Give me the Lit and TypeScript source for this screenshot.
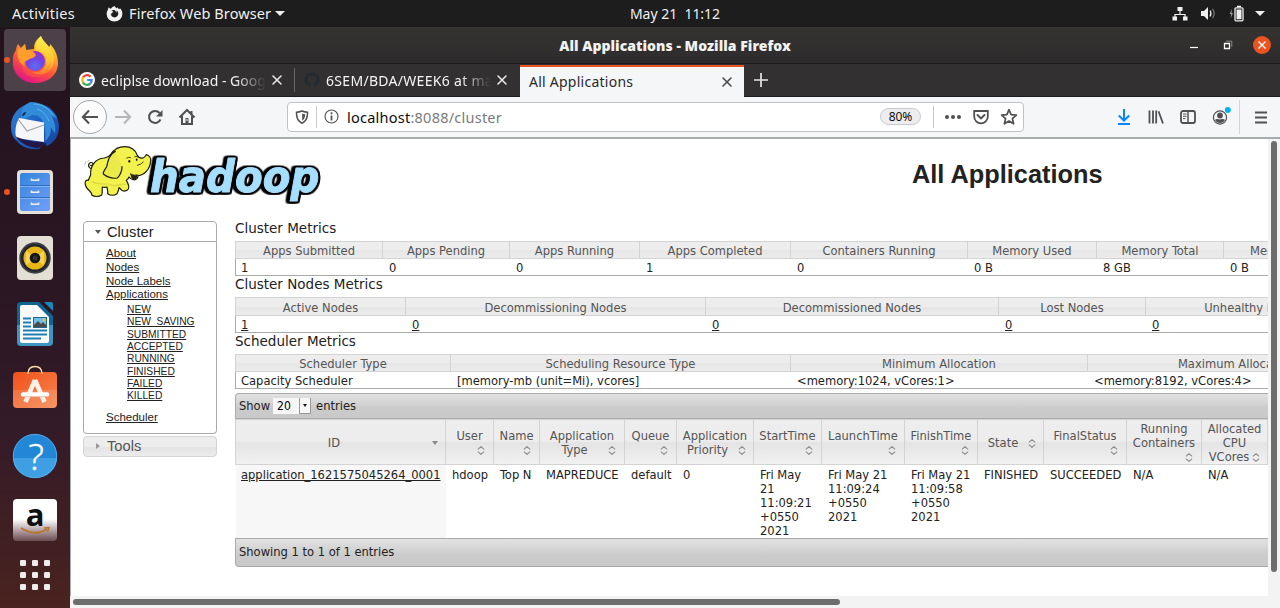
import { LitElement, html, css, svg } from "lit";
import { customElement } from "lit/decorators.js";

/* ---------- icon helpers ---------- */
const icon = (size: number, body: unknown, box = size) =>
  html`<svg width=${size} height=${size} viewBox="0 0 ${box} ${box}" fill="none">${body}</svg>`;

const closeX = (c: string) =>
  icon(12, svg`<path d="M2 2l8 8M10 2l-8 8" stroke=${c} stroke-width="1.6" stroke-linecap="round"/>`);

const sortBoth = html`<svg class="both" width="8" height="9" viewBox="0 0 8 9" fill="none"><path d="M1.300 3.500V2.900L4 .7l2.700 2.200v.6M1.300 5.500v.6L4 8.300l2.700-2.200v-.6" stroke="#8c8c8c" stroke-width="1.150"/></svg>`;

@customElement("desktop-topbar")
class DesktopTopbar extends LitElement {
  static styles = css`
    :host { display: grid; grid-template-columns: 1fr auto 1fr; align-items: center; height: 27px; background: #1d1d1d;
      color: #f0f0f0; font: 14px/27px "Noto Sans", "Open Sans", sans-serif; white-space: pre; }
    .left { display: flex; align-items: center; padding-left: 12px; font-size: 14.500px; }
    .act { width: 94px; letter-spacing: 0.25px; }
    .app { margin-left: 6px; width: 142px; letter-spacing: 0.1px; }
    .fx { display: flex; }
    .caret { border: 5px solid transparent; border-top-color: #f0f0f0; border-bottom: 0; margin-left: 4px; }
    .right { display: flex; align-items: center; justify-content: flex-end; padding-right: 15px; }
    .clock { margin-left: 70px; letter-spacing: -0.02px; }
    .net { margin-right: 13px; } .vol { margin-right: 11px; } .bat { margin-right: 7px; }
    svg { display: block; }
  `;
  render() {
    return html`
      <div class="left">
        <span class="act">Activities</span>
        <span class="fx">${icon(17, svg`<path d="M8.500 1C9 2.200 10 2.500 10.500 3.500l1-1.200c.6 1 1 1.500 1.700 1.900l.8-.9C16 5.500 16.600 7.200 16.300 9.500A7.800 7.200 0 0 1 .7 9.300C.5 7.500 1 6 2 4.700c0-.9.2-1.700.8-2.500.4.800 1 1.300 2 1.500C6 2.500 7 1.500 8.500 1z" fill="#f2f2f2"/><path d="M8.800 5.200C7.500 4.800 6.200 5 5.300 5.800l2 .8c-.3 1.300-2.300 1.500-2.300 3 0 1.500 1.600 2.800 3.500 2.800 2.200 0 3.800-1.600 3.800-3.800 0-1.600-.8-2.500-1.800-3 .3 1 .2 1.700-.2 2.200C10 6.600 9.600 5.700 8.800 5.200z" fill="#1d1d1d"/>`)}</span>
        <span class="app">Firefox Web Browser</span><i class="caret"></i>
      </div>
      <span class="clock">May 21  11:12</span>
      <div class="right">
        <span class="net">${icon(16, svg`<path d="M8 4v5M3 11V8.500h10V11" stroke="#f0f0f0" stroke-width="1.200"/><path d="M5.500 1h5v4h-5zM.5 10.500h4.500v4H.5zM11 10.500h4.500v4H11z" fill="#f0f0f0"/>`)}</span>
        <span class="vol">${icon(15, svg`<path d="M0 5h3l4-4v13l-4-4H0z" fill="#f0f0f0"/><path d="M9 4.500q2 3 0 6" stroke="#f0f0f0" stroke-width="1.200"/><path d="M11.500 2.800q3.500 4.700 0 9.400" stroke="#777" stroke-width="1.200"/>`)}</span>
        <span class="bat">${icon(17, svg`<path d="M5 4L2.500 9h1.700L3.500 13.500 6 8H4.500z" fill="#999"/><rect x="8" y="2.800" width="8" height="13" rx="1" stroke="#f0f0f0" stroke-width="1.300"/><path d="M10 .8h4v1.500h-4zM9.500 4.500h5v9.700h-5z" fill="#f0f0f0"/>`)}</span>
        <i class="caret"></i>
      </div>`;
  }
}

@customElement("desktop-dock")
class DesktopDock extends LitElement {
  static styles = css`
    :host { display: flex; flex-direction: column; width: 70px; height: 581px; box-sizing: border-box;
      background: linear-gradient(#22131d, #2b1624 45%, #341b28 70%, #49231f); }
    .cell { display: grid; grid-template-columns: 4px 62px 4px; align-items: center; height: 66px; }
    .tile { width: 62px; height: 62px; border-radius: 4px; display: grid; place-items: center; }
    .active { background: #4c4149; }
    .dot { width: 6px; height: 6px; border-radius: 3px; background: #e95420; position: relative; left: 4px; z-index: 1; }
    .store { height: 62px; } .help { height: 74px; } .amz { height: 54px; } .apps { height: 56px; }
    .amz .tile, .apps .tile { height: 54px; }
    svg { display: block; overflow: visible; }
    .q { font: 300 37px "Open Sans", sans-serif; }
    .a { font: bold 31px "Open Sans", sans-serif; }
  `;
  cell(body: unknown, cls = "", running = false, active = false) {
    return html`<div class="cell ${cls}">
      <span>${running ? html`<div class="dot"></div>` : ""}</span>
      <div class="tile ${active ? "active" : ""}">${body}</div>
    </div>`;
  }
  render() {
    return html`
      ${this.cell(icon(50, svg`
        <defs>
          <linearGradient id="fa" x1=".8" y1="0" x2=".3" y2="1"><stop offset="0" stop-color="#fff44f"/><stop offset=".35" stop-color="#ffa52a"/><stop offset=".65" stop-color="#ff4f3f"/><stop offset="1" stop-color="#e0128a"/></linearGradient>
          <linearGradient id="fb" x1=".5" y1="0" x2=".4" y2="1"><stop offset="0" stop-color="#fff44f"/><stop offset=".6" stop-color="#ffc52e"/><stop offset="1" stop-color="#ff8a2a"/></linearGradient>
          <radialGradient id="fc" cx=".5" cy=".75" r=".8"><stop offset="0" stop-color="#5a70f5"/><stop offset=".5" stop-color="#7542e5"/><stop offset="1" stop-color="#a32bc8"/></radialGradient>
        </defs>
        <path d="M31 1c1 4 5 7 8 11 1-1 1-2 1-3 5 5 8 12 8 19 0 12-10 20-23 20S2.800 39 2.800 27c0-6 1.200-9 3.200-12 0-2 1-4 2-6l3 4 4-4 1 6c2 0 5-1 8-1 0-6 2-9 7-13z" fill="url(#fa)"/>
        <path d="M31 1c1 4 5 7 8 11 7 8 6 18 0 24-5 4-13 4-17 1 9 1 15-4 14-12 0-5-4-8-10-9 -2-6 1-11 5-15z" fill="url(#fb)"/>
        <circle cx="25" cy="26" r="10" fill="url(#fc)"/>
        <path d="M8 14l3-1 4-4 1 6c3 0 7 0 10 5 -1 3-5 3-8 5-3 1-4 3-3 7-6-4-9-10-7-18z" fill="#ff9d2d"/>
        <path d="M15 25c1 7 6 12 14 11 7 0 11-5 12-10 0 12-9 17-19 16C13 40 10 32 15 25z" fill="#ff6a34" opacity=".4"/>`), "", true, true)}
      ${this.cell(icon(50, svg`
        <defs><linearGradient id="ta" x1="0" y1="0" x2="1" y2="1"><stop offset="0" stop-color="#2f86d6"/><stop offset=".5" stop-color="#1e5fc0"/><stop offset="1" stop-color="#1a3f9a"/></linearGradient></defs>
        <path d="M17 3C20 0 25 1 28 3c13 1 21 11 21 23 0 9-5 16-12 19-1-1-2-2-1-4-3 3-8 8-7 7-12 1-18-3-22-8C2 37 1 30 1 25 1 15 7 7 17 3z" fill="url(#ta)"/>
        <path d="M17 3c10-5 24 3 30 14-3 0-4-1-6-3 4 7 5 12 4 18-2-2-3-4-4-6 0 7-2 11-6 14C37 26 32 13 23 14c-6 1-8 6-12 5 0-7 1-13 6-16z" fill="#318bd8"/>
        <path d="M24 3c8 0 15 5 19 11M27 8c6 2 9 6 12 12" stroke="#5cb4ec" stroke-width="1"/>
        <path d="M9 17L34 21.500V41L6 37Q4 26 9 17z" fill="#f6f6f8"/><path d="M8 18l9 12 17-6" stroke="#a0a0aa" stroke-width="1.200"/>
        <path d="M5 35c8 4 18 6 29 6 0 4-3 5-6 6-8 0-18-5-23-12z" fill="#241747"/>
        <path d="M12 15q1-4 4-4-1 4-4 4z" fill="#10233e"/>`))}
      ${this.cell(icon(46, svg`
        <defs><linearGradient id="da" x1="0" y1="0" x2=".7" y2="1"><stop offset="0" stop-color="#3384dc"/><stop offset="1" stop-color="#6b9cf5"/></linearGradient></defs>
        <rect x="5" y="1" width="36" height="44" rx="4" fill="#e6e1d8"/><rect x="8" y="4" width="30" height="38" rx="2.500" fill="url(#da)"/>
        <path d="M8 16.500h30M8 28.500h30" stroke="#1d61b8" stroke-width="1"/><path d="M8 17.300h30M8 29.300h30" stroke="#a9cbfa" stroke-width=".7"/>
        <path d="M19.500 9.500v1.700h7V9.500M19.500 21.500v1.700h7v-1.700M19.500 33.500v1.700h7v-1.700" stroke="#f2eee6" stroke-width="1.600"/>`), "", true)}
      ${this.cell(icon(46, svg`<rect x="5" y="1" width="36" height="44" rx="4" fill="#e3dfd5"/>
        <circle cx="23" cy="23" r="15.700" fill="#3a3e43"/><circle cx="23" cy="23" r="13.800" fill="#20242b"/><circle cx="23" cy="23" r="11.500" fill="#e8b716"/><path d="M23 23L32 15.500v15zM23 23l-9-7.500v15z" fill="#f5d35a"/>
        <circle cx="23" cy="23" r="5.300" fill="#151515"/><circle cx="23" cy="23" r="2.500" fill="#333"/>`))}
      ${this.cell(icon(46, svg`<path d="M9 1h18l14 14v26a4 4 0 0 1-4 4H9a4 4 0 0 1-4-4V5a4 4 0 0 1 4-4z" fill="#0f6593"/><path d="M5 24h36v17a4 4 0 0 1-4 4H9a4 4 0 0 1-4-4z" fill="#5fb5e0" opacity=".6"/>
        <path d="M32 1h7a2 2 0 0 1 2 2v7z" fill="#1b89b8"/>
        <path d="M10 4h15l12 12v24a2 2 0 0 1-2 2H10a2 2 0 0 1-2-2V6a2 2 0 0 1 2-2z" fill="#fbfbfb"/>
        <path d="M11 17.500h8M11 21.500h8M11 25.500h8M11 29.500h24M11 33.500h24M11 37.500h18" stroke="#1d7fb5" stroke-width="1.800"/>
        <rect x="21.500" y="16.500" width="13" height="10" fill="#6fbfe8" stroke="#1b6a96"/><path d="M22 26v-2l4-4 3 3 2-2 3 3v2z" fill="#4a4a4a"/><circle cx="32" cy="19" r="1.400" fill="#f2c230"/>`))}
      ${this.cell(icon(48, svg`
        <defs><linearGradient id="sa" x1="0" y1="0" x2="1" y2="1"><stop offset="0" stop-color="#f1511b"/><stop offset="1" stop-color="#f5874f"/></linearGradient></defs>
        <g transform="translate(0 -1)"><rect x="2" y="9" width="44" height="36" rx="4" fill="url(#sa)"/>
        <path d="M2 27h44v14a4 4 0 0 1-4 4H6a4 4 0 0 1-4-4z" fill="#fff" opacity=".12"/><path d="M17 11c0-5 3-7.500 7-7.500s7 2.500 7 7.500" stroke="#f5d9a4" stroke-width="1.400"/>
        <path d="M24 17L14.500 39M24 17l9.500 22" stroke="#fff0e8" stroke-width="4.600"/><path d="M12 31.500h24" stroke="#fff" stroke-width="4.400" stroke-linecap="round"/><path d="M12 33.600h24" stroke="#f0b59c" stroke-width=".8"/></g>`), "store")}
      ${this.cell(icon(46, svg`
        <circle cx="23" cy="23" r="22" fill="#2387d8"/><path d="M1 25h44a22 20 0 0 1-44 0z" fill="#3e9fe2"/><circle cx="23" cy="23" r="21.700" stroke="#5ab2ee" stroke-width=".8"/>
        <text class="q" x="24" y="36.500" text-anchor="middle" fill="#fff" stroke="#fff" stroke-width=".5">?</text>`), "help")}
      ${this.cell(icon(46, svg`
        <defs><linearGradient id="aa" x1="0" y1="0" x2="0" y2="1"><stop offset=".48" stop-color="#fff"/><stop offset="1" stop-color="#6b4a52"/></linearGradient></defs>
        <rect x="1" y="2" width="44" height="42" rx="4" fill="url(#aa)"/><text class="a" x="23" y="29" text-anchor="middle" fill="#101010">a</text>
        <path d="M9 31q14 9 26 1" stroke="#b8752b" stroke-width="1.800"/><path d="M32 31l5-.5-1.500 4.500" stroke="#b8752b" stroke-width="1.500"/>`), "amz")}
      ${this.cell(icon(30, svg`${[0, 12, 24].map(y => [0, 12, 24].map(x => svg`<rect x=${x} y=${y} width="6" height="6" rx="1.300" fill="#efedec"/>`))}`), "apps")}`;
  }
}

@customElement("browser-chrome")
class BrowserChrome extends LitElement {
  static styles = css`
    :host { display: block; height: 112px; font-family: "Noto Sans", "Open Sans", sans-serif; }
    svg { display: block; }
    .title { display: grid; grid-template-columns: 1fr auto 1fr; align-items: center; height: 36px; background: linear-gradient(#353431, #2d2b2c);
      border-bottom: 1px solid #1c1b1b; color: #f2f2f2; font-size: 14px; font-weight: 700; }
    .title b { letter-spacing: 0.04px; }
    .win { display: flex; align-items: center; justify-content: flex-end; padding-right: 9px; }
    .win span { display: grid; place-items: center; width: 34px; height: 20px; }
    .win .x { width: 18px; height: 18px; border-radius: 9px; background: #e95420; margin-left: 8px; }
    .tabs { display: flex; height: 33px; box-sizing: border-box; background: #323031; border-bottom: 1px solid #1d1c1c; padding-left: 1px; }
    .tab { display: flex; align-items: center; width: 223px; height: 32px; box-sizing: border-box; padding: 0 11px 0 8px; font-size: 14px; color: #f4f4f4; }
    .tab.two { width: 225px; padding: 0 12px 0 9px; }
    .two .txt { letter-spacing: 0.3px; }
    .tab .txt { flex: 1; overflow: hidden; white-space: nowrap; padding-left: 6px; margin-right: 5px; height: 32px; line-height: 33px;
      -webkit-mask-image: linear-gradient(90deg, #000 82%, transparent 100%); }
    .sep { width: 1px; height: 24px; background: #6a696a; align-self: center; }
    .tab.on { width: 224px; height: 32px; margin-top: 1px; background: #f5f6f7; border-top: 2px solid #e95420; color: #2b2a2b; }
    .tab.on .txt { padding-left: 1px; -webkit-mask-image: none; line-height: 30px; height: 30px; letter-spacing: 0.25px; }
    .plus { align-self: center; padding-left: 9px; }
    .bar { display: flex; align-items: center; height: 42px; box-sizing: border-box; background: #f5f6f7; border-bottom: 2px solid #aaabac; padding: 0 3px 1px 3px; }
    .c { display: grid; place-items: center; width: 32px; height: 32px; }
    .back { width: 32px; height: 32px; border: 1px solid #a5a6a8; border-radius: 17px; background: #fcfcfc; }
    .url { display: flex; align-items: center; width: 737px; height: 30px; box-sizing: border-box; border: 1px solid #c0c2c6; border-radius: 4px; background: #fff; margin-left: 84px; }
    .url .v { width: 1px; height: 22px; background: #c8c9cc; }
    .addr { margin-left: 2px; width: 533px; font-size: 14.500px; color: #7b7b7e; letter-spacing: 0.24px; white-space: nowrap; }
    .addr b { font-weight: 400; color: #0c0c0d; }
    .zoom { width: 39px; height: 15px; border: 1px solid #c8c9cb; border-radius: 9px; background: #ededf0; font-size: 12px; line-height: 15px; text-align: center; color: #0c0c0d; margin-right: 12px; }
    .s { display: grid; place-items: center; width: 28px; height: 28px; }
    .push { margin-left: auto; }
    .bar > .v { width: 1px; height: 34px; background: #d4d5d8; margin: 0 5px 0 3px; }
  `;
  render() {
    const g = "#505053";
    return html`
      <div class="title"><span></span><b>All Applications - Mozilla Firefox</b>
        <div class="win">
          <span>${icon(10, svg`<path d="M1 7.500h8" stroke="#fff" stroke-width="1.200"/>`)}</span>
          <span>${icon(10, svg`<path d="M1.500 3.500h5v5h-5z" stroke="#fff" stroke-width="1.300"/><path d="M3 1.200h5.800V7" stroke="#888"/>`)}</span>
          <span class="x">${icon(10, svg`<path d="M1.500 1.500l7 7M8.500 1.500l-7 7" stroke="#fff" stroke-width="1.400"/>`)}</span>
        </div>
      </div>
      <div class="tabs">
        <div class="tab">${icon(16, svg`<circle cx="8" cy="8" r="8" fill="#fff"/><g stroke-width="2.200"><path d="M11.600 4.700A4.700 4.700 0 0 0 4 5.500" stroke="#ea4335"/><path d="M4.200 5.200a5 5 0 0 0 0 5.600" stroke="#fbbc05"/><path d="M4 10.500a4.700 4.700 0 0 0 7.200 1.100" stroke="#34a853"/><path d="M8.200 8h4.500q0 2.200-1.500 3.600" stroke="#4285f4"/></g>`)}
          <span class="txt">ecliplse download - Goog</span>${closeX("#e8e8e8")}</div>
        <i class="sep"></i>
        <div class="tab two">${icon(16, svg`<path d="M8 .5a7.500 7.500 0 0 0-2.400 14.600c.5.1.6-.2.6-.5v-1.600C4 13.500 3.500 12 3.500 12 3 11 2.500 11 2.500 10.500c1 0 1.500 1 1.500 1 .7 1 1.800.8 2.200.6 0-.5.3-.9.5-1-2-.3-3.500-1-3.500-3.600 0-.9.300-1.600.8-2.100-.1-.3-.3-1.200.1-2.200 0 0 .7-.2 2.200.8a7 7 0 0 1 3.600 0c1.500-1 2.200-.8 2.200-.8.4 1 .2 1.900.1 2.200.5.5.8 1.200.8 2.100 0 2.600-1.600 3.300-3.500 3.500.3.300.6.900.6 1.500v2c0 .3.100.6.500.5A7.500 7.500 0 0 0 8 .5z" fill="#222a31"/>`)}
          <span class="txt">6SEM/BDA/WEEK6 at ma</span>${closeX("#e8e8e8")}</div>
        <div class="tab on"><span class="txt">All Applications</span>${closeX("#4a4a4c")}</div>
        <span class="plus">${icon(16, svg`<path d="M8 1v14M1 8h14" stroke="#e6e6e6" stroke-width="1.700"/>`)}</span>
      </div>
      <div class="bar">
        <span class="c back">${icon(18, svg`<path d="M17 9H2M8 2.500L1.800 9 8 15.500" stroke=${g} stroke-width="2"/>`)}</span>
        <span class="c">${icon(18, svg`<path d="M1 9h15M10 2.500L16.200 9 10 15.500" stroke="#b4b5b7" stroke-width="2"/>`)}</span>
        <span class="c">${icon(16, svg`<path d="M13.500 10.500A6 6 0 1 1 12.600 4" stroke=${g} stroke-width="2"/><path d="M15.500 1v6.500H9z" fill=${g}/>`)}</span>
        <span class="c">${icon(18, svg`<path d="M1.500 9.500L9 2l7.500 7.500M4 8v8h10V8M13.500 3v3" stroke=${g} stroke-width="2"/><path d="M7.500 10h3v6h-3z" fill=${g}/><path d="M8.500 11h1v2h-1z" fill="#fff"/>`)}</span>
        <div class="url">
          <span class="s">${icon(14, svg`<path d="M7 1q3 1.200 5.500 1.200C12.700 8 11 11.500 7 13.200 3 11.500 1.300 8 1.500 2.200 4 2.200 7 1 7 1z" stroke=${g} stroke-width="1.500"/><path d="M7.200 3.500q1.500.7 3 .8c0 3-1 5-3 6.400z" fill=${g}/>`)}</span>
          <i class="v"></i>
          <span class="s">${icon(15, svg`<circle cx="7.500" cy="7.500" r="6.500" stroke=${g} stroke-width="1.100"/><path d="M7.500 6.500v5M7.500 3.300v1.900" stroke=${g} stroke-width="1.700"/>`)}</span>
          <span class="addr"><b>localhost</b>:8088/cluster</span>
          <span class="zoom">80%</span><i class="v"></i>
          <span class="s push">${icon(18, svg`<circle cx="3" cy="9" r="2" fill=${g}/><circle cx="9" cy="9" r="2" fill=${g}/><circle cx="15" cy="9" r="2" fill=${g}/>`)}</span>
          <span class="s">${icon(16, svg`<path d="M1.200 2h13.600v5.500a6.800 6.800 0 0 1-13.600 0z" stroke=${g} stroke-width="1.800"/><path d="M4.500 6L8 9.500 11.500 6" stroke=${g} stroke-width="1.900" stroke-linecap="round"/>`)}</span>
          <span class="s">${icon(18, svg`<path d="M9 1.700l2.100 5 5.300.4-4 3.500 1.200 5.200L9 13l-4.600 2.800 1.200-5.200-4-3.500 5.300-.4z" stroke=${g} stroke-width="1.700" stroke-linejoin="round"/>`)}</span>
        </div>
        <span class="c push">${icon(16, svg`<path d="M8 0v11.500M2.800 6.500L8 11.700l5.200-5.200M2 15h12" stroke="#0a84ff" stroke-width="2"/>`)}</span>
        <span class="c">${icon(16, svg`<path d="M1.500 1.500v13M5 1.500v13M8.200 1.500v13M10.500 2.300L15 14.500" stroke=${g} stroke-width="1.800"/>`)}</span>
        <span class="c">${icon(16, svg`<rect x="1" y="2" width="14" height="12" rx="2" stroke=${g} stroke-width="1.800"/><path d="M8 2v12" stroke=${g} stroke-width="1.500"/><path d="M3 5h3.500M3 7.300h3.500M3 9.600h2.500" stroke=${g}/>`)}</span>
        <span class="c">${icon(22, svg`<circle cx="11" cy="11.500" r="6.600" stroke=${g} stroke-width="1.200"/><circle cx="11" cy="9.500" r="2.900" fill=${g}/><path d="M6 14c1.500-1.700 2.500-.5 5-.5s3.500-1.200 5 .5c-1 2-3 3-5 3s-4-1-5-3z" fill=${g}/><circle cx="18.800" cy="4" r="3" fill="#00b3f4"/>`)}</span>
        <i class="v"></i>
        <span class="c">${icon(14, svg`<path d="M1 2.500h12M1 7.500h12M1 12.500h12" stroke=${g} stroke-width="1.900"/>`)}</span>
      </div>`;
  }
}

@customElement("hadoop-logo")
class HadoopLogo extends LitElement {
  static styles = css`
    :host { display: block; }
    svg { display: block; overflow: visible; }
    text { font: italic 700 134px "DejaVu Sans", Verdana, sans-serif; fill: #a5deff; stroke: #a5deff; stroke-width: 3; stroke-linejoin: round;
      filter: drop-shadow(-4px 0 0 #000) drop-shadow(5px 0 0 #000) drop-shadow(0 -4px 0 #000) drop-shadow(0 5px 0 #000) drop-shadow(-7px 0 0 #000); }
  `;
  render() {
    return html`<svg width="240" height="60" viewBox="36 18 720 180" fill="none">
      <text x="234" y="162" textLength="508" lengthAdjust="spacingAndGlyphs">hadoop</text>
      <g fill="#f3f14c" stroke="#1a1a08" stroke-width="3.600" stroke-linejoin="round" stroke-linecap="round">
        <path d="M66 92C54 96 46 84 52 76q8-6 11 2-1 6-7 4" fill="none"/>
        <path d="M56 110C54 84 70 62 96 60c8-2 14-2 20-10 8-14 24-24 43-24 18 0 32 10 36 24 4 8 10 12 18 10 6-2 8-8 10-10 8 2 14 10 13 19-2 24-18 42-38 44 0 8-6 14-14 12-6 0-10-4-13-8-2 6-4 8-8 10 6 10 10 18 6 26-4 6-14 8-20 4-4-4-6-8-8-8-2 8-2 12-6 18-8 6-20 6-28 0 2-8-2-14-2-20-8 2-14 0-14 0-2 10 2 16-2 24-8 6-22 6-30 0 2-6-6-12-12-18-6-6-10-18-6-24 4-4 8-2 8-2z"/>
        <path d="M130 40C112 48 108 68 104 86c-4 8-12 14-10 22 12 10 30 14 42 12 8-6 14-22 14-34" fill="#ece94a"/>
        <path d="M164 60q6-4 12-1M188 56q5-3 9 1M196 82q12-2 18-10" fill="none" stroke-width="2.400"/>
        <ellipse cx="172" cy="70" rx="3" ry="4" fill="#111" stroke="none"/><ellipse cx="194" cy="65" rx="2.500" ry="3.500" fill="#111" stroke="none"/>
        <path d="M176 108q10 6 20 2-2 14-10 14t-10-16z" fill="#24241c" stroke-width="2"/>
      </g>
      <path d="M38 80l4-10M46 72l6-6M126 36l12-10" stroke="#999" stroke-width="2"/>
      <path d="M60 130c20 14 50 2 60 12 20 4 30-8 42-2" stroke="#c8c43c" stroke-width="4" opacity=".5"/>
    </svg>`;
  }
}

type Col = [label: string, width: number, value: string];

@customElement("metrics-table")
class MetricsTable extends LitElement {
  static properties = { cols: { attribute: false }, linked: { type: Boolean }, heading: {}, tall: { type: Boolean } };
  declare cols: Col[]; declare linked: boolean; declare heading: string; declare tall: boolean;
  static styles = css`
    :host { display: block; color: #222; font: 12.8px/15px "DejaVu Sans Condensed", "DejaVu Sans", sans-serif; font-stretch: condensed; white-space: nowrap; }
    .h { font: 13.500px/16px "DejaVu Sans", sans-serif; height: 21px; }
    .row { display: flex; border-left: 1px solid #aaa; }
    .hd { border-left-color: #d3d3d3; }
    .th { box-sizing: border-box; height: 18px; line-height: 17px; text-align: center; color: #555; border: 1px solid #d3d3d3; border-left: 0;
      background: linear-gradient(#ededed 50%, #e6e6e6 51%, #ececec); }
    .tall .th { height: 19px; line-height: 20px; }
    .vals { height: 16px; border-bottom: 1px solid #aaa; }
    .td { box-sizing: border-box; padding-left: 6px; line-height: 17px; }
    .td:first-child { padding-left: 5px; }
    .td u { text-underline-offset: 1px; }
  `;
  render() {
    return html`<div class="h">${this.heading}</div>
      <div class=${this.tall ? "tall" : ""}>
        <div class="row hd">${this.cols.map(([l, w]) => html`<div class="th" style="flex:0 0 ${w}px">${l}</div>`)}</div>
        <div class="row vals">${this.cols.map(([, w, v]) => html`<div class="td" style="flex:0 0 ${w}px">${this.linked ? html`<u>${v}</u>` : v}</div>`)}</div>
      </div>`;
  }
}

@customElement("apps-table")
class AppsTable extends LitElement {
  static styles = css`
    :host { display: block; color: #222; font: 12.8px/14px "DejaVu Sans Condensed", "DejaVu Sans", sans-serif; font-stretch: condensed; }
    .bar { box-sizing: border-box; display: flex; align-items: center; height: 26px; border: 1px solid #aaa; border-right: 0; border-radius: 4px 0 0 0; padding-left: 3px;
      background: linear-gradient(#e2e2e2, #cbcbcb 60%, #c9c9c9); }
    .foot { height: 29px; border-radius: 0 0 0 4px; padding-bottom: 2px; }
    .sel { display: flex; height: 16px; width: 38px; margin: 0 5px 0 3px; background: #f7f7f8; color: #000; font-size: 12px; line-height: 17px; }
    .sel span { flex: 1; padding-left: 4px; }
    .sel i { box-sizing: border-box; width: 12px; border: solid #999; border-width: 0 1px 1px 1px; display: grid; place-items: center; }
    .sel i::after { content: ""; border: 2.500px solid transparent; border-top: 3px solid #111; border-bottom: 0; }
    .row { display: flex; }
    .head { border-left: 1px solid #d3d3d3; }
    .th { box-sizing: border-box; height: 46px; display: flex; flex-direction: column; justify-content: center; text-align: center; color: #555; white-space: pre;
      border: 1px solid #d3d3d3; border-left: 0; padding-top: 2px; background: linear-gradient(#ededed 48%, #e4e4e4 52%, #f1f1f1); }
    .ln { display: flex; align-items: center; justify-content: center; height: 14px; }
    .end { display: flex; justify-content: flex-end; padding-right: 8px; height: 14px; align-items: center; }
    .lab { flex: 1; }
    .id { padding-right: 7px; }
    .cell { box-sizing: border-box; height: 73px; padding: 3px 0 0 6px; white-space: pre; }
    .first { background: #f7f7f7; margin-left: 1px; padding-left: 5px; }
    .down { border: 3.500px solid transparent; border-top: 4px solid #888; border-bottom: 0; }
    u { text-underline-offset: 1px; }
    .gap { width: 10px; } .small { width: 3px; }
  `;
  render() {
    const end = html`<div class="end">${sortBoth}</div>`;
    const cols: [unknown, number, string][] = [
      [html`<div class="ln id"><span class="lab">ID</span><i class="down"></i></div>`, 210, "application_1621575045264_0001"],
      [html`<div>User</div>${end}`, 48, "hdoop"],
      [html`<div>Name</div>${end}`, 46, "Top N"],
      [html`<div>Application</div><div class="ln"><span class="gap"></span><span class="small"></span>Type<span class="gap"></span><span class="gap"></span>${sortBoth}</div>`, 85, "MAPREDUCE"],
      [html`<div>Queue</div>${end}`, 52, "default"],
      [html`<div>Application</div><div class="ln"><span class="small"></span>Priority<span class="gap"></span>${sortBoth}</div>`, 77, "0"],
      [html`<div>StartTime</div>${end}`, 68, "Fri May\n21\n11:09:21\n+0550\n2021"],
      [html`<div>LaunchTime</div>${end}`, 83, "Fri May 21\n11:09:24\n+0550\n2021"],
      [html`<div>FinishTime</div>${end}`, 73, "Fri May 21\n11:09:58\n+0550\n2021"],
      [html`<div class="ln"><span class="small"></span>State<span class="gap"></span>${sortBoth}</div>`, 66, "FINISHED"],
      [html`<div>FinalStatus</div>${end}`, 83, "SUCCEEDED"],
      [html`<div>Running</div><div>Containers</div>${end}`, 75, "N/A"],
      [html`<div>Allocated</div><div>CPU</div><div class="ln">VCores<span class="small"></span>${sortBoth}</div>`, 66, "N/A"],
    ];
    return html`
      <div class="bar">Show <div class="sel"><span>20</span><i></i></div> entries</div>
      <div class="row head">${cols.map(([l, w]) => html`<div class="th" style="flex:0 0 ${w}px">${l}</div>`)}</div>
      <div class="row">${cols.map(([, w, v], i) => html`<div class="cell ${i ? "" : "first"}" style="flex:0 0 ${w}px">${i ? v : html`<u>${v}</u>`}</div>`)}</div>
      <div class="bar foot">Showing 1 to 1 of 1 entries</div>`;
  }
}

@customElement("side-nav")
class SideNav extends LitElement {
  static styles = css`
    :host { display: block; font-family: "Liberation Sans", Arial, sans-serif; color: #222; }
    .head { display: flex; align-items: center; height: 19px; box-sizing: content-box; border: 1px solid #aaa; border-radius: 4px 4px 0 0; font-size: 14.700px; padding-left: 10px; gap: 6px; }
    .t { width: 7px; display: grid; place-items: center; }
    .dn { border: 3.500px solid transparent; border-top: 4px solid #555; border-bottom: 0; }
    .rt { border: 3.500px solid transparent; border-left: 4px solid #999; border-right: 0; }
    .body { box-sizing: border-box; height: 192px; border: 1px solid #aaa; border-top: 0; border-radius: 0 0 4px 4px; padding: 4.200px 0 0 22px; font-size: 11.500px; }
    a { display: block; text-decoration: underline; text-underline-offset: 1px; height: 13.700px; line-height: 14px; }
    .sub { padding: 2px 0 0 21px; font-size: 10.250px; }
    .sub a { height: 12.350px; line-height: 13px; }
    .sch { margin-top: 8px; }
    .tools { height: 18px; padding-bottom: 1px; margin-top: 2px; border-color: #d3d3d3; border-radius: 4px; color: #555; background: linear-gradient(#ededed 50%, #e4e4e4 51%, #ececec); }
  `;
  render() {
    return html`<div class="head"><span class="t"><i class="dn"></i></span>Cluster</div>
      <div class="body">
        ${["About", "Nodes", "Node Labels", "Applications"].map(s => html`<a>${s}</a>`)}
        <div class="sub">${["NEW", "NEW_SAVING", "SUBMITTED", "ACCEPTED", "RUNNING", "FINISHED", "FAILED", "KILLED"].map(s => html`<a>${s}</a>`)}</div>
        <a class="sch">Scheduler</a>
      </div>
      <div class="head tools"><span class="t"><i class="rt"></i></span>Tools</div>`;
  }
}

@customElement("app-root")
class AppRoot extends LitElement {
  static styles = css`
    :host { display: block; width: 1280px; height: 608px; overflow: hidden; background: #fff; }
    .desk { display: flex; }
    .win { width: 1210px; }
    .view { display: grid; grid-template-columns: 1198px 12px; grid-template-rows: 457px 12px; height: 469px; }
    .page { box-sizing: border-box; overflow: hidden; border-left: 1px solid #aaabac; padding: 5px 0 0 12px; background: #fff; }
    .top { display: flex; height: 76px; }
    .logo { padding-left: 1px; }
    h1 { margin: 14px 0 0 588px; font: bold 25.350px/32px "Liberation Sans", Arial, sans-serif; color: #222; white-space: nowrap; }
    .cols { display: grid; grid-template-columns: 134px 1033px; column-gap: 18px; }
    .side { padding-top: 1px; }
    .apps { margin-top: 4px; display: block; }
    .v, .h { background: #f3f3f4; }
    .v { grid-row: 1 / 3; grid-column: 2; padding: 2px 0 0 3px; }
    .v i { display: block; width: 6px; height: 431px; border-radius: 3px; background: #6d6d6d; }
    .h { padding: 3px 0 0 3px; }
    .h i { display: block; width: 767px; height: 6px; border-radius: 3px; background: #6d6d6d; }
  `;
  render() {
    const cluster: Col[] = [["Apps Submitted", 147, "1"], ["Apps Pending", 127, "0"], ["Apps Running", 130, "0"], ["Apps Completed", 151, "1"],
      ["Containers Running", 177, "0"], ["Memory Used", 129, "0 B"], ["Memory Total", 127, "8 GB"], ["Memory Reserved", 157, "0 B"]];
    const nodes: Col[] = [["Active Nodes", 170, "1"], ["Decommissioning Nodes", 300, "0"], ["Decommissioned Nodes", 293, "0"], ["Lost Nodes", 147, "0"], ["Unhealthy Nodes", 216, "0"]];
    const sched: Col[] = [["Scheduler Type", 215, "Capacity Scheduler"], ["Scheduling Resource Type", 340, "[memory-mb (unit=Mi), vcores]"],
      ["Minimum Allocation", 297, "<memory:1024, vCores:1>"], ["Maximum Allocation", 298, "<memory:8192, vCores:4>"]];
    return html`
      <desktop-topbar></desktop-topbar>
      <div class="desk">
        <desktop-dock></desktop-dock>
        <div class="win">
          <browser-chrome></browser-chrome>
          <div class="view">
            <div class="page">
              <div class="top"><hadoop-logo class="logo"></hadoop-logo><h1>All Applications</h1></div>
              <div class="cols">
                <side-nav class="side"></side-nav>
                <div>
                  <metrics-table heading="Cluster Metrics" .cols=${cluster}></metrics-table>
                  <metrics-table heading="Cluster Nodes Metrics" linked tall .cols=${nodes}></metrics-table>
                  <metrics-table heading="Scheduler Metrics" .cols=${sched}></metrics-table>
                  <apps-table class="apps"></apps-table>
                </div>
              </div>
            </div>
            <div class="v"><i></i></div>
            <div class="h"><i></i></div>
          </div>
        </div>
      </div>`;
  }
}
